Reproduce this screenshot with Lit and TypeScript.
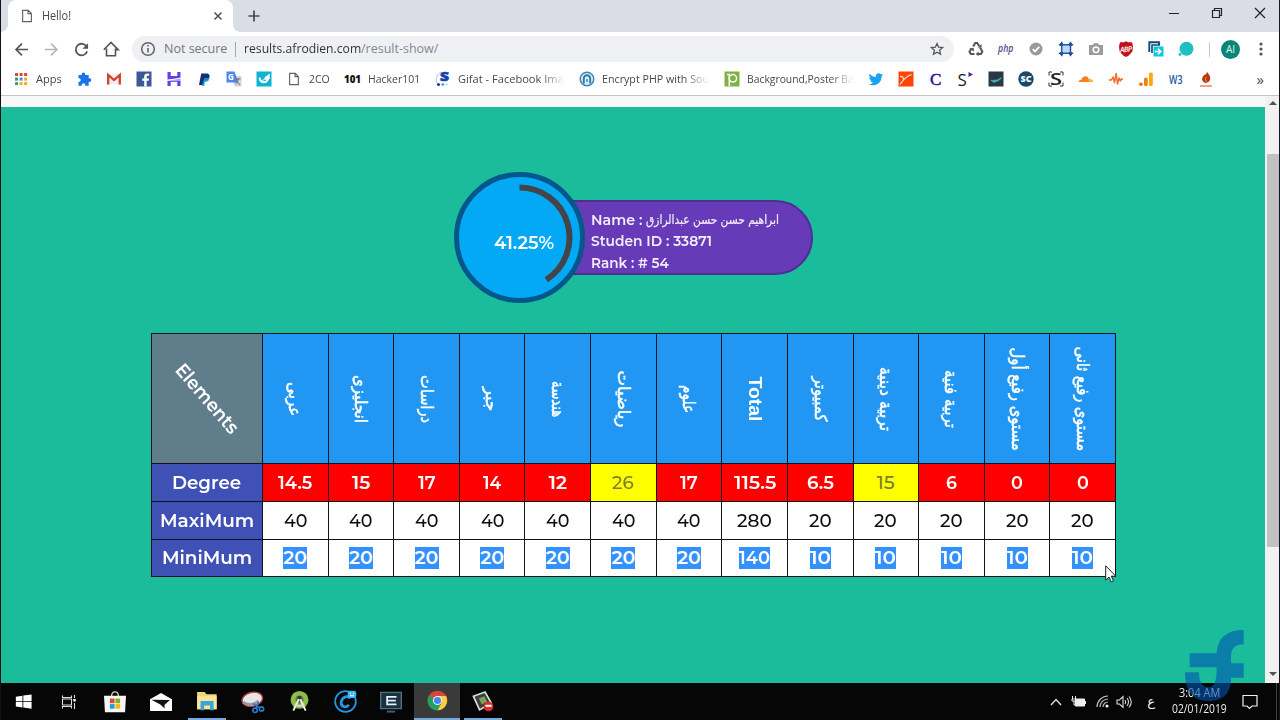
import { LitElement, html, svg, css } from "lit";
import { customElement, property } from "lit/decorators.js";

/** A single line of text squeezed or stretched to a given width. */
@customElement("fit-text")
class FitText extends LitElement {
  @property({ type: Number }) w = 0;
  static styles = css`
    :host { display: block; flex: none; direction: ltr; text-align: left; }
    .line { display: inline-block; white-space: pre; transform-origin: 0 50%; vertical-align: top; }
  `;
  render() {
    return html`<span class="line"><slot></slot></span>`;
  }
  firstUpdated() {
    this.style.width = this.w + "px";
    requestAnimationFrame(() => {
      const line = this.renderRoot.querySelector(".line") as HTMLElement;
      const n = line.offsetWidth;
      if (n) line.style.transform = `scaleX(${this.w / n})`;
    });
  }
}

const fit = (t: string, w: number) => html`<fit-text w=${w}>${t}</fit-text>`;
const ico = (body: unknown, s = 16) =>
  html`<svg class="ico" width=${s} height=${s} viewBox="0 0 16 16">${body}</svg>`;

const page = svg`<path d="M3 1.5h6.5L13 5v9.5H3z M9.2 1.8V5.3H12.8" fill="none" stroke="#5f6368" stroke-width="1.3"/>`;

const apps = svg`${["#d84437", "#d84437", "#d84437", "#2f9e58", "#4285f4", "#e8b020", "#2f9e58", "#e8b020", "#e8b020"].map(
  (c, i) => svg`<rect x=${1.2 + (i % 3) * 5.2} y=${1.2 + Math.floor(i / 3) * 5.2} width="3.400" height="3.400" fill=${c}/>`)}`;

const leftMarks = [
  svg`<path d="M3 4.500h3.300C5.300 1 10.700 1 9.700 4.500H13.200v3.300c3.500-1 3.500 4.500 0 3.500v4H9.800c.5-3.300-4.100-3.300-3.600 0H3v-4c3 .5 3-4 0-3.500z" fill="#1a73e8" transform="translate(-.5 -.5)"/>`,
  svg`<path d="M1 3h14v10.500H1z" fill="#f3eeee"/><path d="M2.200 13.500V4l5.800 5 5.800-5v9.500" fill="none" stroke="#d63b30" stroke-width="2.300"/>`,
  svg`<path d="M.5.5h15v15H.5z" fill="#3b5998"/><path d="M10.700 15.500V9.700h2l.4-2.300h-2.400V6c0-.8.3-1.200 1.300-1.200h1.200V2.700C9.800 2.100 8.200 3 8.200 5.600v1.800h-2v2.300h2v5.800z" fill="#fff"/>`,
  svg`<path d="M1.500 1h3.200v4l6.600 0V1h3.200v7.500H1.500z M1.500 15h3.200v-4.200h6.600V15h3.200V9.500H1.500z" fill="#673de6"/><path d="M1 9.500l14-2.500" stroke="#fff" stroke-width="1.200"/>`,
  svg`<path d="M5.200 2.500h5c3 0 4 2 3 4.600-.7 2-2.500 2.800-5 2.800l-.7 4H3z" fill="#12306f"/><path d="M8.300 7h5c0 3-2 4-4.300 4l-.8 4H5.500z" fill="#179bd7" opacity=".8"/>`,
  svg`<path d="M6 5h9.500v10.500H8.500z" fill="#d5d5d8"/><path d="M.5.5h8l3.700 11H.5z" fill="#4f86e8"/><text x="2" y="9" font-size="8" font-weight="700" fill="#fff">G</text><path d="M9.500 8h5M12 7v1c0 2-1 4-2.500 5M10.500 10l3.500 4" stroke="#6c7076" fill="none"/>`,
  svg`<path d="M.5.5h15v15H.5z" fill="#0fb3d3"/><path d="M3.800 6.500c-.8 6.500 8.200 6.500 8.600-.5" stroke="#fff" stroke-width="2" fill="none"/><path d="M8.500 6.800L13.500 3v4.500L10 9z M4.500 9.500c2 .5 4-.5 5.500-2" stroke="#fff" fill="#fff" stroke-width=".6"/>`,
];

const i101 = svg`<text x="-1" y="12" font-size="10.500" font-weight="900" fill="#111" textLength="17" lengthAdjust="spacingAndGlyphs">101</text>`;
const iGifat = svg`<path d="M6 1C1 4 .5 9 2 12" stroke="#a8c4e8" fill="none"/><text x="5" y="10" font-size="12.500" font-weight="900" fill="#1741a6" stroke="#1741a6" stroke-width=".6" textLength="9" lengthAdjust="spacingAndGlyphs">S</text><circle cx="3.500" cy="13.500" r="1.600" fill="#1741a6"/><circle cx="7.800" cy="13.500" r="1.400" fill="#6e96d8"/><circle cx="11.500" cy="13.500" r="1.100" fill="#b7cdee"/>`;
const iEncrypt = svg`<circle cx="8" cy="8" r="6.800" fill="#d9edf8" stroke="#3f86b4" stroke-width="1.500"/><path d="M4.800 12.500V7.500a3.200 3.200 0 0 1 6.400 0V12.500" fill="none" stroke="#3178a6" stroke-width="1.900"/><path d="M8 8v3" stroke="#3178a6" stroke-width="1.300"/>`;
const iPoster = svg`<path d="M.5.5h15v15H.5z" fill="#7cb342"/><path d="M5.300 15V3.500H3" stroke="#fff" stroke-width="1.500" fill="none"/><circle cx="8.900" cy="7.300" r="3.700" fill="none" stroke="#fff" stroke-width="1.500"/>`;

const rightMarks = [
  svg`<path d="M15.300 3.500c-.6.300-1.100.4-1.700.5.600-.4 1-.9 1.200-1.500-.6.300-1.200.6-1.900.7A3 3 0 0 0 7.800 6C5.300 5.800 3.100 4.700 1.600 2.800c-.8 1.400-.4 3.100.9 4-.5 0-.9-.1-1.300-.3 0 1.400 1 2.600 2.400 2.900h-1.300c.4 1.200 1.400 2 2.800 2C3.800 12.700 2.200 13 .8 12.900 6.700 16.400 13.700 12.600 13.700 5z" fill="#1da1f2"/>`,
  svg`<path d="M.5.5h15v15H.5z" fill="#ff4505"/><path d="M2 5.500c2-.8 3.500 1 3.700 3.500M2 13.500C4.500 10 7 5.500 13.500 3.500" stroke="#ffe1d5" fill="none" stroke-width="1.200"/>`,
  svg`<text x="2" y="13.700" font-size="17" class="serif" fill="#2a0fa5" stroke="#2a0fa5" stroke-width=".5">C</text>`,
  svg`<text x="-.500" y="14.500" font-size="17" fill="#222">S</text><path d="M10.500 1l4.500 2.500-4.500 2.500z" fill="#3b2c92"/>`,
  svg`<path d="M.5.500h15v15H.5z" fill="#2b3844"/><path d="M3 9l3 2c3-.5 5-3 7.500-4M5 9.500h6" stroke="#3aafae" fill="none" stroke-width="1.500"/>`,
  svg`<circle cx="8" cy="8" r="7.700" fill="#18486b"/><text x="2.500" y="11.300" font-size="9" font-weight="800" fill="#fff" textLength="11">SC</text>`,
  svg`<path d="M4 1H1v3.500M12 1h3v3.500M4 15H1v-3.500M12 15h3v-3.500" fill="none" stroke="#333"/><text x="2" y="13.700" font-size="16.500" font-weight="600" fill="#222" textLength="12" lengthAdjust="spacingAndGlyphs">S</text>`,
  svg`<path d="M.5 11c.3-1.700 1.500-2 2.700-2C4 5 9 3.500 10.700 7.500L11 11z" fill="#f48120"/><path d="M11 11V8c2.300-.2 4 1 4.200 3z" fill="#faad3f"/>`,
  svg`<path d="M1 9h2.500L5 6l1.500 5.500L8.200 2.500 9.500 13l1.500-6 1.300 3L13.500 8H15" fill="none" stroke="#f26b30" stroke-width="1.500" stroke-linejoin="round"/>`,
  svg`<rect x="11" y="1.500" width="3.800" height="13.500" rx="1.500" fill="#f9ab00"/><rect x="6" y="6.500" width="3.800" height="8.500" rx="1.500" fill="#f08020"/><circle cx="2.900" cy="13.200" r="1.800" fill="#e8710a"/>`,
  svg`<text x="1" y="12.700" font-size="12.500" font-weight="600" fill="#1a5aa5" textLength="13.500" lengthAdjust="spacingAndGlyphs">W3</text>`,
  svg`<path d="M9 .5c1 2.500 3.800 4 3.200 7.500-.4 2.300-2 3.500-4.500 4C4 10.500 3.300 8 5 5.500 6.500 3.500 9 3.500 9 .5z" fill="#b8380f"/><path d="M8.500 6c-2 2-.5 3 0 5" stroke="#f7ab4d" fill="none"/><path d="M2 15h12" stroke="#e8642c" stroke-width="1.200"/>`,
];

const extensions = [
  svg`<path d="M5.200 5.500l2-3.500h2l1.900 3M12 6.500l2.300 4-1.300 2.500H9M6.500 13H2.800L1.500 10.800 3.500 7.500" fill="none" stroke="#555a60" stroke-width="2.100"/><path d="M9.500 6.500h4V3z M10.500 10.300v5L7.800 13z M1 7.800l4.500-1 .7 3.700z" fill="#555a60"/>`,
  svg`<text x="0" y="10.700" font-size="10" font-weight="600" font-style="italic" fill="#4f4c8c" textLength="15.500" lengthAdjust="spacingAndGlyphs">php</text>`,
  svg`<circle cx="8" cy="8" r="6.500" fill="#9a9a9a"/><path d="M4.800 8.200L7 10.400l4.300-4.600" stroke="#fff" stroke-width="1.800" fill="none"/>`,
  svg`<path d="M4 4h8.500v8H4z" fill="#bdd8f6"/><path d="M3.700.8v14.400M12.500.8v14.400M.8 3.700h14.400M.8 12.300h14.400" stroke="#25569c" stroke-width="1.500"/><path d="M2 2h3v3H2zM11 2h3v3h-3zM2 11h3v3H2zM11 11h3v3h-3z" fill="#25569c"/>`,
  svg`<path d="M1 4h3.500L6 2.300h4L11.500 4H15v10H1z" fill="#9b9b9b"/><circle cx="8" cy="8.800" r="3.500" fill="#fff"/><circle cx="8" cy="8.800" r="2" fill="#9b9b9b"/>`,
  svg`<path d="M8 .3l2 1h4l1 4-.6 5.200-3.900 4.200L8 16l-2.500-1.300L1.600 10.500 1 5.300l1-4h4z" fill="#c1121c"/><text x="2" y="11" font-size="7.500" font-weight="600" font-style="italic" fill="#fff" textLength="12" transform="rotate(-6 8 8)">ABP</text>`,
  svg`<path d="M1.300 11V1.300H11V4" fill="none" stroke="#114a78" stroke-width="1.900"/><path d="M4 12V4H12" fill="none" stroke="#114a78" stroke-width="1.600"/><rect x="5.500" y="5.500" width="10" height="10" fill="#16c6dc"/><path d="M6.800 10.500h6M10 7.700l2.800 2.800L10 13.300" stroke="#fff" stroke-width="1.600" fill="none"/>`,
  svg`<circle cx="8.500" cy="7.700" r="7" fill="#21bfc2"/><circle cx="2" cy="13.500" r="1.400" fill="#21bfc2"/>`,
];

const taskIcons = [
  svg`<path d="M.8 3.500l6.200-1v5.200H.8zM7.800 2.400l7.800-1.100v6.400H7.800zM.8 8.400H7v5.200l-6.200-1zM7.800 8.400h7.800v6.400L7.800 13.700z" fill="#fff"/>`,
  svg`<path d="M1.500 1.500v2h9v-2M1.500 14.500v-2h9v2M1.500 5h9v6h-9z" fill="none" stroke="#ddd" stroke-width="1.100"/><path d="M13.500 1v3M13.500 9v6" stroke="#ddd" stroke-width="1.100"/><path d="M12.300 5h2.400v2.500h-2.400z" fill="#fff"/>`,
  svg`<path d="M5.500 4C5.500-.5 10.500-.5 10.500 4" fill="none" stroke="#ccc"/><path d="M0 3.500h16L15.300 15.500H.7z" fill="#f6f6f6"/><path d="M4.300 5.500h3.400v3.400H4.300z" fill="#e24a26"/><path d="M8.300 5.500h3.400v3.400H8.300z" fill="#7db31d"/><path d="M4.300 9.500h3.400v3.400H4.300z" fill="#1d9de0"/><path d="M8.300 9.500h3.400v3.400H8.300z" fill="#f8b517"/>`,
  svg`<path d="M0 6l8-4.500L16 6v8.500H0z" fill="#fff"/><path d="M1 6.300l13.500.2-4 3.600.2 2.600L7.500 9.800z" fill="#111"/>`,
  svg`<path d="M.8 1.500h5.500l1.300 1.500H15v11H.8z" fill="#f2d675"/><path d="M.8 4.500H15v9.500H.8z" fill="#fbe59b"/><path d="M3.300 14.800V8h9.500v6.800h-2.600v-3.500H5.900v3.500z" fill="#39a5dd"/>`,
  svg`<ellipse cx="7.500" cy="6" rx="7.500" ry="5" fill="#e9e4e6" stroke="#b8404a" transform="rotate(-12 7.500 6)"/><path d="M1 8c3 3 8 2 11-1" stroke="#989aa0" stroke-width="2" fill="none"/><path d="M8 9l5 3.500M12 8l-2 5" stroke="#2d7ac4" stroke-width="1.200"/><circle cx="9.500" cy="14" r="1.600" fill="none" stroke="#2d7ac4" stroke-width="1.200"/><circle cx="14.200" cy="13" r="1.500" fill="none" stroke="#2d7ac4" stroke-width="1.200"/>`,
  svg`<circle cx="8" cy="6.800" r="6.800" fill="#8cbf4a"/><circle cx="8" cy="6.500" r="3" fill="#54743a"/><path d="M8 5L3.300 15M8 5l4.700 10" stroke="#eee" stroke-width="1.500"/><path d="M4.500 10c2 1.800 5 1.800 7 0" fill="none" stroke="#ddd" stroke-width="1.200"/><circle cx="8" cy="5" r="1.400" fill="#333"/>`,
  svg`<circle cx="8" cy="8" r="7.200" fill="none" stroke="#2497e3" stroke-width="1.200"/><path d="M11 6C10 3.500 5.800 4.500 5 8.300c-.5 4 4 4.200 5.200 1.800" fill="none" stroke="#2497e3" stroke-width="1.900"/><rect x="9.500" y=".5" width="6" height="5" rx="1.500" fill="#3bb5f1"/><path d="M11 2.500h.8M13.200 2.500h.8M11 4h3" stroke="#fff" stroke-width=".7"/>`,
  svg`<path d="M.5 1h15v11.800H.5z" fill="#17333f" stroke="#50707d"/><path d="M12 4.200H5.200v5.600H12M5.500 7h6" stroke="#eef" stroke-width="1.300" fill="none"/><path d="M5 15h6" stroke="#40606c" stroke-width="1.400"/>`,
  svg`<circle cx="8" cy="8" r="7.500" fill="#dc4437"/><path d="M8 8L1.500 4.200A7.500 7.500 0 0 0 8 15.500L11.200 9.900z" fill="#1fa15f"/><path d="M8 15.500A7.500 7.500 0 0 0 14.500 4.500H8l3.200 5.400z" fill="#fdcd41"/><circle cx="8" cy="8" r="3.500" fill="#f1f1f1"/><circle cx="8" cy="8" r="2.700" fill="#4484f3"/>`,
  svg`<path d="M1 4.500l8.500-3 4.500 8-8.500 5z" fill="#37403a" stroke="#ddd" stroke-width="1.200"/><path d="M5 6l4-1.500 2 4-4 2z" fill="#7ea05f"/><circle cx="12" cy="12" r="3.500" fill="#e02b2b"/><path d="M9.800 11.500h4.400" stroke="#fff" stroke-width="1.500"/>`,
];

type Cell = [string, number];
const heads: Cell[] = [
  ["عربى", 34], ["انجليزى", 48], ["دراسات", 48], ["جبر", 24], ["هندسة", 36],
  ["رياضيات", 57], ["علوم", 28], ["Total", 45], ["كمبيوتر", 45], ["تربية دينية", 64],
  ["تربية فنية", 58], ["مستوى رفيع أول", 103], ["مستوى رفيع ثانى", 105],
];
const degree: Cell[] = [["14.5", 34], ["15", 18], ["17", 18], ["14", 18], ["12", 18], ["26", 22], ["17", 18],
  ["115.5", 42], ["6.5", 27], ["15", 18], ["6", 11], ["0", 12], ["0", 12]];
const maximum: Cell[] = [...Array(7).fill(["40", 23]), ["280", 35], ...Array(5).fill(["20", 23])];
const minimum: Cell[] = [...Array(7).fill(["20", 24]), ["140", 31], ...Array(5).fill(["10", 21])];

@customElement("app-root")
class AppRoot extends LitElement {
  static styles = css`
    :host { display: block; }
    * { box-sizing: border-box; }
    .screen { position: relative; width: 1280px; height: 720px; overflow: hidden; display: flex; flex-direction: column;
      border-left: 1px solid #111; border-right: 1px solid #15171a; background: #fff; font: 12px/16px "Open Sans", "Noto Sans", sans-serif; color: #45484c; }
    svg { display: block; flex: none; overflow: visible; }
    .serif { font-family: "Liberation Serif", serif; }
    .tabs { flex: none; height: 32px; background: #dadde5; display: flex; padding-left: 7px; }
    .tab { position: relative; width: 225px; background: #fff; border-radius: 8px 8px 0 0; display: flex; align-items: center; padding: 0 11px 0 12px; }
    .tab::before, .tab::after { content: ""; position: absolute; bottom: 0; width: 7px; height: 7px; }
    .tab::before { left: -7px; background: radial-gradient(circle at 0 0, transparent 6.5px, #fff 7px); }
    .tab::after { right: -7px; background: radial-gradient(circle at 100% 0, transparent 6.5px, #fff 7px); }
    .tab fit-text { margin: 0 auto 0 8px; }
    .plus { align-self: center; margin-left: 15px; }
    .caption { margin-left: auto; display: flex; align-items: center; height: 26px; margin-right: -2px; }
    .caption .cell { width: 43px; display: flex; justify-content: center; }
    .bar { flex: none; display: flex; align-items: center; }
    .slot { width: 30px; flex: none; display: flex; justify-content: center; }
    .nav { height: 34px; padding-left: 5px; }
    .omni { width: 822px; height: 26px; border-radius: 13px; background: #eff0f4; display: flex; align-items: center; padding: 0 10px 0 8px; margin: 0 7px 0 6px; font-size: 12.5px; }
    .gray { color: #74777b; margin-left: 8px; }
    .sep { width: 1px; height: 15px; background: #a5a7ab; margin: 0 8px; }
    .url { display: flex; color: #303236; }
    .path { color: #85888c; }
    .star { margin-left: auto; }
    .sep2 { width: 1px; height: 15px; background: #c5c7ca; margin: 0 11px 0 8px; }
    .avatar { width: 19px; height: 19px; border-radius: 50%; background: #0b8575; color: #e4f5f2; font-size: 10px; line-height: 19px; text-align: center; }
    .dots { margin-left: 19px; }
    .marks { height: 29px; padding: 0 0 4px 5px; font-size: 11.5px; }
    .g7 { margin-left: 7px; } .g8 { margin-left: 8px; } .g9 { margin-left: 9px; }
    .fade { width: 107px; flex: none; -webkit-mask-image: linear-gradient(90deg, #000 78%, transparent); mask-image: linear-gradient(90deg, #000 78%, transparent); }
    .more { margin-left: auto; margin-right: 15px; font-size: 15px; }
    .page { height: 588px; flex: none; display: flex; border-top: 1px solid #c3c5c7; }
    .view { flex: 1; display: flex; flex-direction: column; background: #f8f8f8; padding-top: 11px; }
    .body { flex: 1; background: #1abc9c; padding: 65.5px 0 0 150px; font-family: Montserrat, Inter, sans-serif; }
    .card { display: flex; align-items: center; margin-left: 302.5px; height: 130px; }
    .ring { z-index: 1; width: 131px; height: 131px; display: grid; place-items: center; flex: none; }
    .ring > * { grid-area: 1 / 1; }
    .pct { color: #fff; font-size: 18.5px; font-weight: 650; padding: 10px 0 0 9px; }
    .pill { width: 274px; height: 75px; margin-left: -46px; border: 2px solid #4b2f91; border-radius: 8px 38px 38px 8px; background: #673ab7; color: #f4eefc; padding: 7px 0 0 50.5px; font-size: 14.5px; font-weight: 600; }
    .row { height: 21.6px; display: flex; align-items: center; gap: 4px; }
    .ar { font-family: "DejaVu Sans", sans-serif; font-weight: 400; font-size: 12.5px; -webkit-text-stroke: 0.2px currentColor; }
    .grid { margin-top: 30.5px; width: 965px; height: 244px; display: grid; grid-template-columns: 110px repeat(13, minmax(0, 1fr)); grid-template-rows: 129px 37px 37px 36px; gap: 1px; padding: 1px; background: #101418; font-size: 19px; line-height: 22px; font-weight: 600; color: #fff; }
    .grid > div { display: flex; align-items: center; justify-content: center; min-width: 0; }
    .corner { background: #607d8b; }
    .corner fit-text { transform: rotate(49deg); }
    .head { background: #2196f3; font-weight: 400; }
    .head fit-text { font-family: "DejaVu Sans", sans-serif; font-size: 17px; -webkit-text-stroke: 0.5px #fff; transform: rotate(90deg); }
    .head.total fit-text { font-family: "Liberation Sans", Inter, sans-serif; font-weight: 700; font-size: 19px; -webkit-text-stroke: 0; }
    .label { background: #3f51b5; padding-right: 1px; }
    .bad { background: #f00; }
    .ok { background: #ff0; color: #7c7c32; font-weight: 500; }
    .num { background: #fff; color: #0c0c0c; font-weight: 500; }
    .low { background: #fff; }
    .sel { background: #3390ff; }
    .scroll { width: 14px; flex: none; background: #f1f1f1; display: flex; flex-direction: column; align-items: center; padding: 4px 0 6px 2px; }
    .thumb { width: 12px; height: 393px; margin: 49px 0 auto; background: #c1c1c1; }
    .task { flex: none; height: 37px; background: #060606; display: flex; color: #eee; }
    .app { width: 46px; flex: none; display: flex; justify-content: center; align-items: center; border-bottom: 0 solid #76a9dc; }
    .app:first-child { width: 44px; margin-right: 1px; }
    .run { margin: 0 4px; width: 38px; border-bottom-width: 2px; }
    .active { background: #3a3a3a; border-bottom-width: 2px; }
    .tray { margin-left: auto; display: flex; align-items: center; }
    .clock { display: flex; flex-direction: column; align-items: center; width: 58px; font-size: 12px; line-height: 16px; margin: -2px 14px 0 15px; }
    .edge { width: 1px; height: 37px; background: #444; margin: 0 2px 0 18px; }
    .lang { margin-left: 15px; font-size: 13px; font-family: "DejaVu Sans", sans-serif; }
    .logo { position: absolute; left: 1184px; top: 630px; }
    .cursor { position: absolute; left: 1104px; top: 565px; }
  `;

  render() {
    const row = (cells: Cell[], cls: (i: number) => string, sel = false) =>
      cells.map(([t, w], i) => html`<div class=${cls(i)}>${sel ? html`<span class="sel">${fit(t, w)}</span>` : fit(t, w)}</div>`);
    return html`
      <div class="screen">
        <div class="tabs">
          <div class="tab">
            ${ico(page, 14)}${fit("Hello!", 29)}
            <svg width="8" height="8" viewBox="0 0 8 8"><path d="M.5.5l7 7M7.500.5l-7 7" stroke="#4a4d51" stroke-width="1.500"/></svg>
          </div>
          <svg class="plus" width="12" height="12" viewBox="0 0 12 12"><path d="M6 .5v11M.5 6h11" stroke="#45484c" stroke-width="1.700"/></svg>
          <div class="caption">
            <div class="cell"><svg width="10" height="10"><path d="M0 5.500h10" stroke="#222"/></svg></div>
            <div class="cell"><svg width="10" height="10"><path d="M.5 2.500h7v7h-7zM2.500 2.500v-2h7v7h-2" fill="none" stroke="#222" stroke-width="1.200"/></svg></div>
            <div class="cell"><svg width="10" height="10"><path d="M0 0l10 10M10 0L0 10" stroke="#222" stroke-width="1.200"/></svg></div>
          </div>
        </div>
        <div class="bar nav">
          <div class="slot">${ico(svg`<path d="M15 8H2.500M8.500 1.700L2.200 8l6.300 6.300" fill="none" stroke="#505357" stroke-width="1.800"/>`, 15)}</div>
          <div class="slot">${ico(svg`<path d="M1 8h12.500M7.500 1.700L13.800 8l-6.300 6.300" fill="none" stroke="#b4b6b9" stroke-width="1.800"/>`, 15)}</div>
          <div class="slot">${ico(svg`<path d="M13.500 5A6.200 6.200 0 1 0 14 10" fill="none" stroke="#505357" stroke-width="1.900"/><path d="M15 1.200v6H9z" fill="#505357"/>`, 15)}</div>
          <div class="slot">${ico(svg`<path d="M3.500 7.500v7.200h9V7.500M.8 8.700L8 1.500l7.200 7.200h-3" fill="none" stroke="#505357" stroke-width="1.600"/>`, 16)}</div>
          <div class="omni">
            ${ico(svg`<circle cx="8" cy="8" r="6.300" fill="none" stroke="#5f6368" stroke-width="1.500"/><path d="M8 7v4.500M8 4v1.600" stroke="#5f6368" stroke-width="1.600"/>`, 16)}
            <span class="gray">${fit("Not secure", 63)}</span><i class="sep"></i>
            <span class="url">${fit("results.afrodien.com", 117)}<span class="path">${fit("/result-show/", 77)}</span></span>
            <span class="star">${ico(svg`<path d="M8 1.700l1.900 4.200 4.500.5-3.400 3 1 4.500L8 11.600l-4 2.300 1-4.500-3.400-3 4.500-.5z" fill="none" stroke="#55585c" stroke-width="1.500"/>`, 14)}</span>
          </div>
          ${extensions.map((e) => html`<div class="slot">${ico(e)}</div>`)}
          <i class="sep2"></i><div class="avatar">AI</div>
          <svg class="dots" width="4" height="14"><circle cx="2" cy="2" r="1.600" fill="#505357"/><circle cx="2" cy="7" r="1.600" fill="#505357"/><circle cx="2" cy="12" r="1.600" fill="#505357"/></svg>
        </div>
        <div class="bar marks">
          <div class="slot">${ico(apps, 14)}</div>${fit("Apps", 26)}<span class="g7"></span>
          ${leftMarks.map((m) => html`<div class="slot">${ico(m)}</div>`)}
          <div class="slot">${ico(page, 14)}</div>${fit("2CO", 21)}
          <div class="slot g8">${ico(i101)}</div>${fit("Hacker101", 52)}
          <div class="slot g8">${ico(iGifat)}</div><div class="fade">${fit("Gifat - Facebook Ima", 106)}</div>
          <div class="slot g7">${ico(iEncrypt)}</div><div class="fade">${fit("Encrypt PHP with Sou", 107)}</div>
          <div class="slot g8">${ico(iPoster)}</div><div class="fade">${fit("Background,Poster Ba", 107)}</div>
          <span class="g7"></span>
          ${rightMarks.map((m) => html`<div class="slot">${ico(m)}</div>`)}
          <span class="more">»</span>
        </div>
        <div class="page">
          <div class="view">
            <div class="body">
              <div class="card">
                <div class="ring">
                  <svg width="131" height="131" viewBox="-65.500 -65.500 131 131">
                    <circle r="63" fill="#03a9f4" stroke="#04578a" stroke-width="5"/>
                    <path d="M0-50A50 50 0 0 1 26.700 42.300" fill="none" stroke="#444548" stroke-width="6"/>
                  </svg>
                  <div class="pct">${fit("41.25%", 60)}</div>
                </div>
                <div class="pill">
                  <div class="row">${fit("Name :", 51)}<span class="ar">${fit("ابراهيم حسن حسن عبدالرازق", 133)}</span></div>
                  <div class="row">${fit("Studen ID : 33871", 121)}</div>
                  <div class="row">${fit("Rank : # 54", 78)}</div>
                </div>
              </div>
              <div class="grid">
                <div class="corner">${fit("Elements", 86)}</div>
                ${heads.map(([t, w]) => html`<div class="head ${t === "Total" ? "total" : ""}">${fit(t, w)}</div>`)}
                <div class="label">${fit("Degree", 69)}</div>
                ${row(degree, (i) => (i === 5 || i === 9 ? "ok" : "bad"))}
                <div class="label">${fit("MaxiMum", 94)}</div>
                ${row(maximum, () => "num")}
                <div class="label">${fit("MiniMum", 90)}</div>
                ${row(minimum, () => "low", true)}
              </div>
            </div>
          </div>
          <div class="scroll">
            <svg width="8" height="5"><path d="M0 5l4-4 4 4z" fill="#505050"/></svg>
            <div class="thumb"></div>
            <svg width="8" height="5"><path d="M0 0l4 4 4-4z" fill="#505050"/></svg>
          </div>
        </div>
        <div class="task">
          ${taskIcons.map((t, i) => html`<div class="app ${i === 4 || i === 10 ? "run" : i === 9 ? "active" : ""}">${ico(t, [17, 16, 22, 22, 22, 22, 21, 23, 22, 21, 22][i])}</div>`)}
          <div class="tray">
            <svg width="12" height="8"><path d="M1 7l5-5.500L11 7" fill="none" stroke="#ddd" stroke-width="1.400"/></svg>
            <svg class="g9" width="16" height="12"><path d="M4.500 3h9v7h-9z" fill="#eee" stroke="#eee"/><path d="M14.500 5v3M1.500 0v3M4.500 0v3M1 3h4v2H1zM3 5v4h2" stroke="#eee" fill="none"/></svg>
            <svg class="g9" width="13" height="13"><path d="M1 12A11 11 0 0 1 12 1M4 12a8 8 0 0 1 8-8M7 12a5 5 0 0 1 5-5" fill="none" stroke="#bbb" stroke-width="1.200"/><circle cx="11" cy="11" r="1.600" fill="#eee"/></svg>
            <svg class="g7" width="16" height="14"><path d="M1 5h2.500L7 1.500v11L3.500 9H1zM9 5q1.500 2 0 4M11 3q3 4 0 8M13 1.500q4.500 5.500 0 11" fill="none" stroke="#ddd" stroke-width="1.100"/></svg>
            <span class="lang">ع</span>
            <div class="clock">${fit("3:04 AM", 41)}${fit("02/01/2019", 55)}</div>
            <svg width="16" height="16"><path d="M1 1.500h14v10.500h-5l-2.500 2.500L5 12H1z" fill="none" stroke="#eee" stroke-width="1.200"/></svg>
            <i class="edge"></i>
          </div>
        </div>
        <svg class="logo" width="58.700" height="71" viewBox="465 60 176 213"><path d="M641 60V103Q603 103 603 140V160H641V203H603C605 255 570 273 535 273C490 273 465 245 465 187H507C507 222 520 232 535 232C553 232 560 215 560 172H479V130H560C563 80 595 60 641 60z" fill="#0055b1" fill-opacity=".6"/></svg>
        <svg class="cursor" width="12" height="18" viewBox="0 0 12 18"><path d="M.7.800V15l3.300-3 2.200 5 2.300-1-2.200-4.800h4.500z" fill="#fff" stroke="#222"/></svg>
      </div>`;
  }
}
